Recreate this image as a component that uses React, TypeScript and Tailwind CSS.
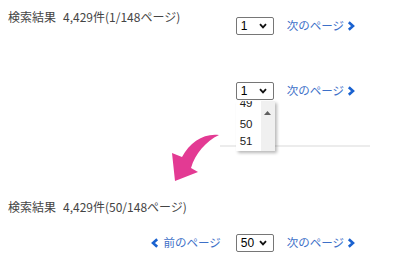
import React from "react";

const jp = "font-['Noto_Sans_CJK_JP','Noto_Sans',sans-serif]";

function Chevron({ dir }: { dir: "left" | "right" }) {
  return (
    <svg width="8" height="10" viewBox="0 0 8 10" className="shrink-0">
      <path
        d={dir === "right" ? "M1.8 1.2 L6 5 L1.8 8.8" : "M6.2 1.2 L2 5 L6.2 8.8"}
        fill="none"
        stroke="#1a62d0"
        strokeWidth="2.6"
        strokeLinejoin="miter"
      />
    </svg>
  );
}

function FakeSelect({ value, open }: { value: string; open?: boolean }) {
  return (
    <div className="relative">
      <div className="w-[38px] h-[18px] border border-[#767676] rounded-[2px] bg-white flex items-center justify-between pl-[4px] pr-[6px]">
        <span className="font-['Liberation_Sans',sans-serif] text-[12px] leading-none text-black">
          {value}
        </span>
        <svg width="8" height="6" viewBox="0 0 8 6">
          <path d="M1 1.2 L4 4.4 L7 1.2" fill="none" stroke="#111" strokeWidth="1.8" />
        </svg>
      </div>
      {open && (
        <div className="absolute left-0 top-[19px] z-20 w-[39px] h-[50px] bg-white overflow-hidden shadow-[2px_2px_3px_rgba(0,0,0,0.28)] flex">
          <div className="flex-1 font-['Liberation_Sans',sans-serif] text-[11.5px] text-[#222]">
            <div className="h-[21px] leading-[17px] pl-[4px] mt-[-6px]">49</div>
            <div className="h-[17px] leading-[17px] pl-[4px]">50</div>
            <div className="h-[17px] leading-[17px] pl-[4px]">51</div>
          </div>
          <div className="w-[14px] bg-[#f0f0f0] flex justify-center pt-[10px]">
            <svg width="7" height="4" viewBox="0 0 7 4">
              <path d="M0 4 L3.5 0 L7 4 Z" fill="#606060" />
            </svg>
          </div>
        </div>
      )}
    </div>
  );
}

function Pager({ value, prev, open }: { value: string; prev?: boolean; open?: boolean }) {
  return (
    <div className={`flex items-center ${jp} text-[11.5px] text-[#3d70c8]`}>
      {prev && (
        <a className="flex items-center gap-[4px] mr-[15px]">
          <Chevron dir="left" />
          <span>前のページ</span>
        </a>
      )}
      <FakeSelect value={value} open={open} />
      <a className="flex items-center gap-[3px] ml-[13px]">
        <span>次のページ</span>
        <Chevron dir="right" />
      </a>
    </div>
  );
}

export default function App() {
  return (
    <div className={`relative w-[400px] h-[268px] bg-white overflow-hidden ${jp} text-[#444]`}>
      {/* 1ページ目 */}
      <div className="flex items-start">
        <div className="pl-[8px] pt-[9px] text-[12px] leading-4">
          検索結果<span className="ml-[7px]">4,429件(1/148ページ)</span>
        </div>
        <div className="ml-auto mr-[45px] mt-[17px]">
          <Pager value="1" />
        </div>
      </div>

      {/* プルダウンを開いたところ */}
      <div className="flex justify-end mr-[45px] mt-[47px]">
        <Pager value="1" open />
      </div>
      <div className="ml-[220px] w-[150px] h-[2px] bg-[#ececec] mt-[45px]" />

      {/* 矢印 */}
      <svg
        className="absolute left-[165px] top-[125px] z-10"
        width="60"
        height="58"
        viewBox="0 0 60 58"
      >
        <path
          d="M54 10 C39 8 25 17 17 32 L7 28 L10 56 L33 47 L26 43 C30 29 41 16 54 10 Z"
          fill="#e33a93"
        />
      </svg>

      {/* 50ページ目 */}
      <div className="pl-[8px] mt-[52px] text-[12px] leading-4">
        検索結果<span className="ml-[7px]">4,429件(50/148ページ)</span>
      </div>
      <div className="flex justify-end mr-[45px] mt-[19px]">
        <Pager value="50" prev />
      </div>
    </div>
  );
}
